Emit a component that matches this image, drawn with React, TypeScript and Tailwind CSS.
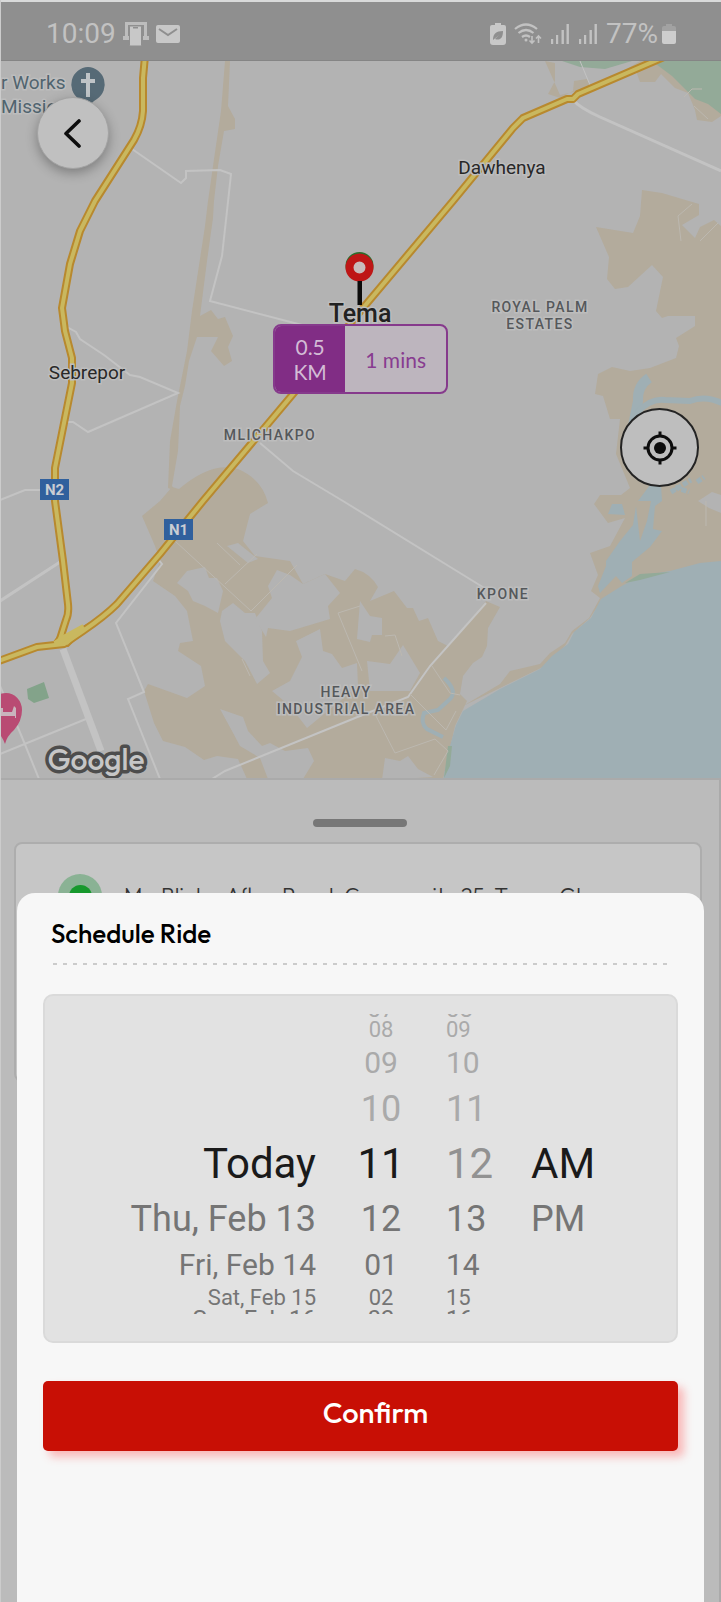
import React from "react";

type Emphasis = "past" | "current" | "next";
type WheelColumn = { label: string; align: string; items: (string | null)[]; muted?: boolean };

const ROWS: { size: string; tone: Emphasis }[] = [
  { size: "h-1 items-end text-[24px] leading-[18px]", tone: "past" },
  { size: "h-6 items-center text-[22px] leading-6", tone: "past" },
  { size: "h-[42px] items-center text-[30px] leading-[38px]", tone: "past" },
  { size: "h-[50px] items-center text-[36px] leading-[46px]", tone: "past" },
  { size: "h-[60px] items-center text-[42px] leading-[58px]", tone: "current" },
  { size: "h-[50px] items-center text-[36px] leading-[50px]", tone: "next" },
  { size: "h-[42px] items-center text-[30px] leading-[42px]", tone: "next" },
  { size: "h-6 items-center text-[22px] leading-6", tone: "next" },
  { size: "h-1 items-start text-[24px] leading-[18px]", tone: "next" },
];

const TONES: Record<Emphasis, string> = {
  past: "text-[#aaaaaa]",
  current: "text-[#1a1a1a]",
  next: "text-[#757575]",
};

const COLUMNS: WheelColumn[] = [
  {
    label: "Date",
    align: "justify-end",
    items: [null, null, null, null, "Today", "Thu, Feb 13", "Fri, Feb 14", "Sat, Feb 15", "Sun, Feb 16"],
  },
  {
    label: "Hour",
    align: "justify-center",
    items: ["07", "08", "09", "10", "11", "12", "01", "02", "03"],
  },
  {
    label: "Minute",
    align: "justify-start",
    items: ["08", "09", "10", "11", "12", "13", "14", "15", "16"],
    muted: true,
  },
  {
    label: "AM or PM",
    align: "justify-start",
    items: [null, null, null, null, "AM", "PM", null, null, null],
  },
];

function Wheel({ column }: { column: WheelColumn }) {
  return (
    <div role="listbox" aria-label={column.label} className="flex min-w-0 flex-col">
      {column.items.map((item, i) => {
        const row = ROWS[i];
        const current = row.tone === "current";
        const tone = current && column.muted ? "text-[#929292]" : TONES[row.tone];
        const shared = `flex w-full overflow-hidden whitespace-nowrap ${row.size} ${column.align} ${tone}`;
        return item === null ? (
          <div key={i} className={shared} />
        ) : (
          <button key={i} type="button" role="option" aria-selected={current} className={shared}>
            {item}
          </button>
        );
      })}
    </div>
  );
}

function Signal() {
  return (
    <svg viewBox="0 0 20 20" className="h-5 w-5" fill="#c2c2c2" aria-hidden="true">
      <rect x="1" y="15" width="2.2" height="5" />
      <rect x="6" y="11" width="2.2" height="9" />
      <rect x="11.500" y="6" width="2.4" height="14" />
      <rect x="16.500" y="0" width="2.4" height="20" />
    </svg>
  );
}

function StatusBar() {
  return (
    <header className="flex h-[61px] items-center justify-between border-t-2 border-b border-t-[#d9dada] border-b-[#858585] bg-[#8f8f8f] pt-1.5 pr-[45px] pl-[45px] text-[#c2c2c2]">
      <div className="flex items-center gap-[7px]">
        <span className="text-[28px] leading-8">10:09</span>
        <svg viewBox="0 0 26 24" className="h-6 w-[26px]" aria-hidden="true">
          <path d="M2 0h22v14h2v4h-6v-4h1V3H5v11h1v4H0v-4h2z" fill="#bdbdbd" />
          <rect x="6.500" y="4" width="12" height="20" rx="1" fill="#c8c8c8" stroke="#8f8f8f" />
          <rect x="10" y="5" width="5" height="1.500" fill="#8f8f8f" />
        </svg>
        <svg viewBox="0 0 24 20" className="h-5 w-6" aria-hidden="true">
          <rect x="0" y="1" width="24" height="18" rx="2" fill="#c8c8c8" />
          <path d="M3 5l9 6 9-6" fill="none" stroke="#8f8f8f" strokeWidth="2" />
        </svg>
      </div>
      <div className="flex items-center gap-2">
        <svg viewBox="0 0 16 22" className="h-[22px] w-4" aria-hidden="true">
          <path d="M5 0h6v2h3q2 0 2 2v15q0 3-3 3H3q-3 0-3-3V4q0-2 2-2h3z" fill="#c8c8c8" />
          <path d="M3 17c0-6 3-9 10-9 0 7-3 10-8 8l4-4-6 5z" fill="#8f8f8f" />
        </svg>
        <svg viewBox="0 0 28 22" className="h-[22px] w-7" fill="none" stroke="#c2c2c2" strokeWidth="2.200" aria-hidden="true">
          <path d="M1 6q11-9 22 0M4.500 10q7.500-6 15 0M8 14q4-3 8 0" />
          <circle cx="12" cy="17" r="1.500" fill="#c2c2c2" stroke="none" />
          <path d="M18 13v7M15.500 17.500l2.500 2.500 2.500-2.500M24.500 20v-7M22 15.500l2.500-2.500 2.500 2.500" strokeWidth="1.600" />
        </svg>
        <Signal />
        <Signal />
        <div className="flex items-center gap-1">
          <span className="text-[28px] leading-8">77%</span>
          <svg viewBox="0 0 14 20" className="h-5 w-[14px]" aria-hidden="true">
            <path d="M4 0h6v2h2q2 0 2 2v4H0V4q0-2 2-2h2z" fill="#a2a2a2" />
            <path d="M0 7h14v11q0 2-2 2H2q-2 0-2-2z" fill="#cdcdcd" />
          </svg>
        </div>
      </div>
    </header>
  );
}

const N2_ROAD =
  "M145 55L143 77V110Q142 125 134 139L95 200L80 230L70 263L62 307L65 330L72 357V382L65 417L55 467V500L63 560L68 603Q69 613 66 619L59 641";
const N1_ROAD =
  "M-4 661L37 646L64 643L83 630Q105 615 117 603L160 553L203 500L293 393L363 307L453 200L513 127L523 117L567 98L573 98L578 93L664 56";

const LAND_HOLES = [
  "177,582 187,570 205,566 209,577 217,577 223,590 218,612 205,605 193,600 188,590",
  "222,610 233,602 245,612 255,612 262,630 263,660 270,672 257,683 245,660 225,640 220,620",
  "268,585 277,569 290,574 303,583 325,573 340,592 328,605 330,618 290,630 268,627 266,636 255,618 272,597",
  "296,640 308,634 320,628 323,650 332,653 342,667 357,662 358,685 340,700 307,727 290,705 272,690 290,680 302,656",
  "220,708 243,716 248,730 262,745 270,742 285,750 308,747 314,760 303,778 268,778 260,757 240,745 232,730",
  "227,545 238,542 258,558 248,562",
  "360,600 370,615 382,617 382,634 372,634 370,641 357,638",
  "367,660 390,663 403,644 420,672 410,690 370,690",
  "385,757 400,760 408,755 418,768 433,776 382,779",
];

function MapDrawing() {
  return (
    <svg viewBox="1 60 720 717" className="block h-full w-full" role="img" aria-label="Map of Tema">
      <rect x="0" y="60" width="721" height="718" fill="#b3b3b3" />

      <g fill="#b3ab9c">
        <path d="M225 60H230L228 105L235 118V128L224 130L218 165L214 200L213 217L207 260L200 315L211 309L218 318L225 316L233 335L228 346L232 360L224 365L211 350L218 336H197L189 360L185 385L180 405L178 450L172 485L176 490L168 487L170 440L177 400L187 350L192 310L205 225L208 200L213 165L221 110Z" />
        <path d="M142 515L160 500L172 486L179 488Q212 460 238 468Q262 478 268 502L250 513L243 540L255 555L290 560L303 583L325 573L345 580L355 568Q370 572 378 586L370 600L394 590L407 607L413 607L419 620L428 617L438 640L448 645L486 600L500 606L488 627L487 645L482 656L473 662L463 675L460 693L467 700L455 725L443 778H247L238 758L217 755L204 759L185 746L163 740L154 722L144 690L148 683L187 697L205 685L201 665L178 650L180 642L193 640L187 610L175 595L153 580L160 560L155 545Z" />
        <path d="M596 226L633 232L640 215L642 189L662 192L699 203V214L682 224L695 237L700 226L714 219L721 225V565L640 577L600 602L590 617L572 633L565 645L545 665L500 687L463 705L500 683L510 670L540 663L550 652L565 642L572 630L589 617L600 597L591 590L598 574L590 552L610 545L625 517L608 522L594 503L600 494H621L630 487L616 453L620 418H610L603 395L595 393L598 373L612 366L630 370L650 367L676 357L679 345L676 337L695 325V315H668L662 317L656 310L663 276L652 264L628 286L615 288L607 278L609 256Z" />
        <path d="M545 60L555 62V80L548 93L560 97L573 90L574 80L587 78L590 84L610 78L640 60L721 60V115L712 121L697 119L695 109L688 92L675 87L661 73L655 81L640 81L636 70L605 84L560 94Z" />
      </g>
      <g fill="#b3b3b3">
        {LAND_HOLES.map((points) => (
          <polygon key={points} points={points} />
        ))}
        <path d="M698 500L712 491L721 494V512L709 507Z" />
      </g>

      <g fill="#93aa98">
        <path d="M562 60L580 66L605 68L632 60ZM652 60L672 75L695 98L708 103L721 113V60Z" />
        <path d="M27 688L44 681L49 697L34 702L28 698Z" fill="#83a38a" />
      </g>

      <path
        d="M443 779L450 745L456 724L463 710L500 688L540 668L552 655L568 643L574 631L591 617L601 598L620 586L640 575L670 570L700 562L721 560V779Z"
        fill="#9fafb4"
      />
      <path d="M625 582L640 573L670 571L640 579ZM448 745H452L450 765L444 777Z" fill="#93aa98" />
      <g fill="#9fafb4">
        <path d="M638 500L650 484H661L662 500L655 505L653 528L662 530L650 546L632 561L632 575L622 582L616 575L600 592L598 585L606 565V560L620 540L633 524L636 505L640 540L647 520L651 500Z" />
        <path d="M608 513L612 503L622 503L625 514Z" />
      </g>
      <g fill="none" stroke="#9fafb4">
        <path d="M649 377Q637 385 638 400L633 425" strokeWidth="10" />
        <path d="M637 412Q650 397 665 399L690 400Q705 394 722 402" strokeWidth="6" />
        <path d="M444 677Q458 690 450 698L438 709L424 712Q420 722 427 728L443 736" strokeWidth="4" />
        <path d="M671 491l20-12M675 486l14 5M697 481l7-5" strokeWidth="5" strokeDasharray="5 2" />
      </g>

      <g fill="none" stroke="#c3c3c3" strokeWidth="2">
        <path d="M132 148L181 182L186 177V170L220 169L231 173L227 210L222 255L210 300L302 324" />
        <path d="M67 326L76 331L80 338L104 354L130 374L140 376L178 392L88 431L73 421H66" />
        <path d="M158 558L162 563L116 622L144 691L128 698L160 778" />
        <path d="M0 499L25 489H40M0 753L86 718M0 685Q12 712 24 741L39 778" />
        <path d="M212 778L225 770L360 715L408 696L430 665L486 602" />
        <path d="M260 442L293 470L343 500L486 588" />
        <path d="M0 600L60 561M573 99Q580 107 600 116L721 170" strokeWidth="3" />
        <path d="M63 648L101 750" strokeWidth="7" />
        <path d="M580 60L590 84" strokeWidth="1" />
      </g>
      <g fill="none" stroke="#bcb8b0" strokeWidth="1">
        <path d="M175 540L251 610L297 564M225 583L257 553M217 542L240 564M338 612L360 605M338 612L362 670M385 635L395 634L402 655M376 715L395 752L435 738L448 750L434 774M432 665L450 692L460 694M410 693L446 729L456 710M242 658L250 675M681 240L678 215L692 203M700 240L718 222M684 96L692 88H702M694 105L708 118M706 500V525" />
      </g>

      <g fill="none" strokeLinejoin="round">
        <path d={N2_ROAD} stroke="#b8892e" strokeWidth="8" />
        <path d={N1_ROAD} stroke="#b8892e" strokeWidth="8" />
        <path d="M54 641L66 625L64 637L90 622L83 630L68 645Z" fill="#c5b55f" stroke="#b8892e" strokeWidth="2" />
        <path d={N2_ROAD} stroke="#c9b85f" strokeWidth="4" />
        <path d={N1_ROAD} stroke="#c9b85f" strokeWidth="4" />
        <path d="M55 643L64 637L84 626" stroke="#c9b85f" strokeWidth="6" />
      </g>

      <g fill="#30609d">
        <rect x="40" y="478" width="29" height="21" />
        <rect x="164" y="518" width="29" height="21" />
      </g>
      <g fill="#c9cdd3" fontSize="15" fontWeight="700" textAnchor="middle">
        <text x="54.500" y="494">N2</text>
        <text x="178.500" y="534">N1</text>
      </g>

      <path d="M88 66a17.500 17.500 0 0 1 9 32q-7 4-9 10q-2-6-9-10a17.500 17.500 0 0 1 9-32z" fill="#566a76" />
      <path d="M88 72V96M81 80H95" stroke="#bfc4c7" strokeWidth="4" fill="none" />
      <g>
        <path d="M-10 709a16 17 0 0 1 32 0Q22 720 14 729Q7 735 5 743Q2 735-4 729z" fill="#b94b73" />
        <path d="M0 707h3v4h9l2-6 2 2v10h-1v-2H0z" fill="#c9b5bd" />
      </g>

      <g fill="#282828" stroke="#bdbdbd" strokeWidth="3" paintOrder="stroke" textAnchor="middle">
        <g fontSize="19">
          <text x="502" y="173">Dawhenya</text>
          <text x="87" y="378">Sebrepor</text>
        </g>
        <g fontSize="19" fill="#50646f" textAnchor="start">
          <text x="1" y="88">r Works</text>
          <text x="1" y="112">Missio</text>
        </g>
        <g fontSize="14" fontWeight="500" fill="#55585b" className="tracking-widest">
          <text x="270" y="439">MLICHAKPO</text>
          <text x="540" y="311">ROYAL PALM</text>
          <text x="540" y="328">ESTATES</text>
          <text x="503" y="598">KPONE</text>
          <text x="346" y="696">HEAVY</text>
          <text x="346" y="713">INDUSTRIAL AREA</text>
        </g>
      </g>

      <circle cx="359.500" cy="265" r="14" fill="#2d6c2c" />
      <circle cx="359.500" cy="266.500" r="10" fill="#c8bcbc" stroke="#be1616" strokeWidth="8" />
      <rect x="357.500" y="280" width="4.500" height="24" fill="#0b0b0b" />
      <text x="360" y="321" fontSize="25" fontWeight="500" textAnchor="middle" fill="#222222" stroke="#bdbdbd" strokeWidth="3" paintOrder="stroke">
        Tema
      </text>
      <text
        x="96"
        y="769"
        fontSize="30"
        fontWeight="500"
        textAnchor="middle"
        fill="#c6c6c6"
        stroke="#4d4d4d"
        strokeWidth="7"
        strokeLinejoin="round"
        paintOrder="stroke"
        className="font-['Outfit','Lato',sans-serif]"
      >
        Google
      </text>
    </svg>
  );
}

function MapView() {
  return (
    <section className="relative aspect-[720/717] w-full overflow-hidden">
      <MapDrawing />
      <button
        type="button"
        aria-label="Back"
        className="absolute top-9 left-9 flex size-[72px] items-center justify-center rounded-full border border-[#a3a3a3] bg-[#c0c0c0] shadow-[0_4px_12px_rgba(0,0,0,0.3)]"
      >
        <svg viewBox="0 0 30 30" className="size-[30px]" fill="none" stroke="#0d0d0d" strokeWidth="3.600" strokeLinecap="round" strokeLinejoin="round">
          <path d="M21 3L8 15.500L21 28" />
        </svg>
      </button>
      <div className="absolute top-[36.700%] left-[37.800%] flex h-[70px] w-[175px] overflow-hidden rounded-lg border-2 border-[#863a8c] bg-[#bdb5be] font-['Lato',sans-serif] text-[21px] leading-[25px]">
        <div className="flex w-[70px] items-center justify-center bg-[#812d85] px-4 text-center text-[#d3bcd5]">0.5 KM</div>
        <div className="flex flex-1 items-center justify-center text-[#883c90]">1 mins</div>
      </div>
      <button
        type="button"
        aria-label="Center on my location"
        className="absolute top-[48.400%] right-[22px] flex size-[79px] items-center justify-center rounded-full border-2 border-[#242424] bg-[#bebebe]"
      >
        <svg viewBox="0 0 34 34" className="size-[34px]" fill="none" stroke="#0d0d0d" strokeWidth="3">
          <circle cx="17" cy="17" r="12" />
          <circle cx="17" cy="17" r="6" fill="#0d0d0d" stroke="none" />
          <path d="M17 0.500V5M17 29V33.500M0.500 17H5M29 17H33.500" />
        </svg>
      </button>
    </section>
  );
}

function RideSheet() {
  return (
    <section className="flex-1 border-t-2 border-r-2 border-[#aaaaaa] bg-[#bbbbbb] pt-[39px]">
      <div className="mx-auto h-2 w-[94px] rounded-full bg-[#777777]" />
      <div className="mt-[15px] mr-[17px] ml-[13px] flex h-60 items-start gap-[22px] rounded-lg border-2 border-[#adadad] bg-[#c6c6c6] pt-[30px] pr-10 pl-[42px]">
        <span className="flex size-11 shrink-0 items-center justify-center rounded-full bg-[#8ab294]">
          <span className="size-[23px] rounded-full bg-[#17992d]" />
        </span>
        <p className="pt-2 font-['Outfit','Lato',sans-serif] text-[22px] leading-7 font-light whitespace-nowrap text-[#333333]">
          Mr. Blinks, Aflao Road, Community 25, Tema, Ghana
        </p>
      </div>
    </section>
  );
}

function ScheduleDialog() {
  return (
    <section
      role="dialog"
      aria-labelledby="schedule-title"
      className="absolute right-[17px] bottom-0 left-4 rounded-t-[18px] bg-[#f7f7f7] px-[26px] pt-[25px] pb-[151px]"
    >
      <h1 id="schedule-title" className="pl-2 font-['Outfit','Lato',sans-serif] text-[26px] leading-8 font-medium text-black">
        Schedule Ride
      </h1>
      <div className="mt-[13px] mr-2.5 ml-2.5 h-0.5 bg-[repeating-linear-gradient(90deg,#cbcbcb_0_4px,transparent_4px_10px)]" />
      <div className="mt-[29px] grid grid-cols-[271fr_130fr_85fr_145fr] rounded-[10px] border-2 border-[#dadada] bg-[#e2e2e2] pt-[18px] pb-[27px]">
        {COLUMNS.map((column) => (
          <Wheel key={column.label} column={column} />
        ))}
      </div>
      <button
        type="button"
        className="mt-[38px] flex h-[70px] w-full items-center justify-center rounded-[5px] bg-[#c80f05] pb-1.5 pl-[30px] font-['Outfit','Lato',sans-serif] text-[29px] leading-9 font-medium text-white shadow-[6px_6px_8px_rgba(255,70,70,0.35)]"
      >
        Confirm
      </button>
    </section>
  );
}

export default function App() {
  return (
    <main className="relative flex min-h-screen flex-col overflow-hidden border-l border-[#cccccc] bg-[#bbbbbb] font-['Roboto',sans-serif]">
      <StatusBar />
      <MapView />
      <RideSheet />
      <ScheduleDialog />
    </main>
  );
}
